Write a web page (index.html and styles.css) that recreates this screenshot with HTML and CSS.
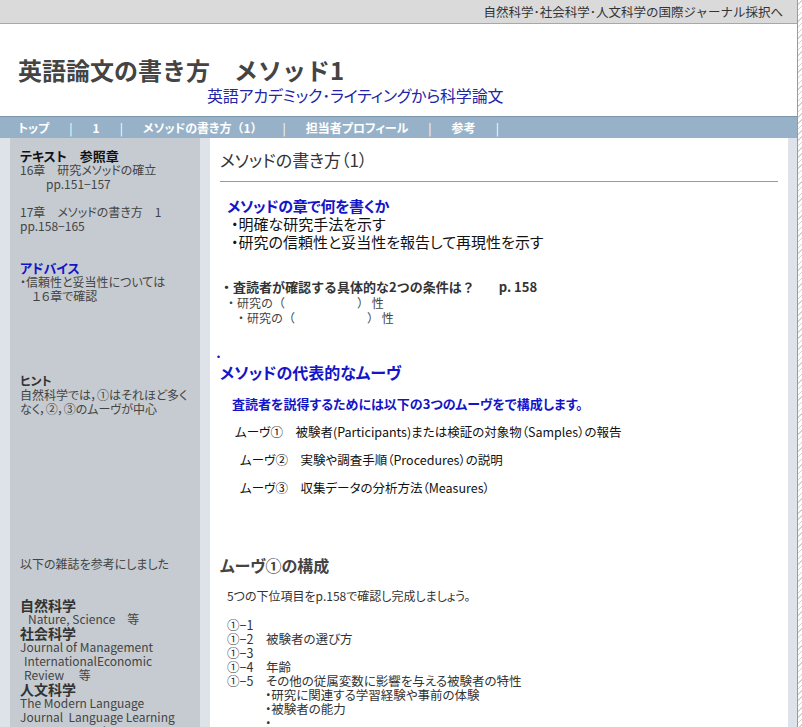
FILE: index.html
```html
<!DOCTYPE html>
<html lang="ja">
<head>
<meta charset="utf-8">
<title>英語論文の書き方　メソッド1</title>
<link rel="stylesheet" href="styles.css">
</head>
<body>
<div class="page">
  <div class="topbar">自然科学･社会科学･人文科学の国際ジャーナル採択へ</div>
  <header class="header">
    <h1 class="title">英語論文の書き方　メソッド1</h1>
    <div class="subtitle">英語アカデミック･ライティングから科学論文</div>
  </header>
  <nav class="nav">
    <span class="nav-item">トップ</span><span class="sep">|</span>
    <span class="nav-item">1</span><span class="sep">|</span>
    <span class="nav-item">メソッドの書き方<span class="fw">（1）</span></span><span class="sep">|</span>
    <span class="nav-item">担当者プロフィール</span><span class="sep">|</span>
    <span class="nav-item">参考</span><span class="sep">|</span>
  </nav>
  <div class="body">
    <aside class="side">
      <div class="s-head">テキスト　参照章</div>
      <div>16章　研究メソッドの確立</div>
      <div class="ind1">pp.151−157</div>
      <div class="blank"></div>
      <div>17章　メソッドの書き方　1</div>
      <div>pp.158−165</div>
      <div class="gap1"></div>
      <div class="s-blue">アドバイス</div>
      <div>・信頼性と妥当性については</div>
      <div>　１６章で確認</div>
      <div class="gap2"></div>
      <div class="s-hint">ヒント</div>
      <div>自然科学では，①はそれほど多く</div>
      <div>なく，②，③のムーヴが中心</div>
      <div class="gap3"></div>
      <div>以下の雑誌を参考にしました</div>
      <div class="gap4"></div>
      <div class="s-cat">自然科学</div>
      <div class="ind2">Nature, Science　等</div>
      <div class="s-cat">社会科学</div>
      <div>Journal of Management</div>
      <div class="ind3">InternationalEconomic</div>
      <div class="ind3">Review　 等</div>
      <div class="s-cat">人文科学</div>
      <div>The Modern Language</div>
      <div>Journal&nbsp; Language Learning</div>
      <div>TESOL Quarterly</div>
    </aside>
    <main class="main">
      <h2 class="m-title">メソッドの書き方（1）</h2>
      <div class="sec1">
        <div class="blue-head">メソッドの章で何を書くか</div>
        <div class="big">・明確な研究手法を示す</div>
        <div class="big">・研究の信頼性と妥当性を報告して再現性を示す</div>
      </div>
      <div class="q">
        <div class="q-head">・査読者が確認する具体的な2つの条件は？<span class="pg">p. 158</span></div>
        <div class="q-a1">・研究の（　　　　　　）&nbsp;性</div>
        <div class="q-a2">・研究の（　　　　　　）&nbsp;性</div>
      </div>
      <div class="dot">・</div>
      <div class="blue-h2">メソッドの代表的なムーヴ</div>
      <div class="blue-lead">査読者を説得するためには以下の3つのムーヴをで構成します。</div>
      <div class="move m1">ムーヴ①　被験者(Participants)または検証の対象物（Samples）の報告</div>
      <div class="move">ムーヴ②　実験や調査手順（Procedures）の説明</div>
      <div class="move">ムーヴ③　収集データの分析方法（Measures）</div>
      <h3 class="sub-h">ムーヴ①の構成</h3>
      <div class="intro">5つの下位項目をp.158で確認し完成しましょう。</div>
      <div class="list">
        <div>①−1</div>
        <div>①−2　被験者の選び方</div>
        <div>①−3</div>
        <div>①−4　年齢</div>
        <div>①−5　その他の従属変数に影響を与える被験者の特性</div>
        <div class="sub">・研究に関連する学習経験や事前の体験</div>
        <div class="sub">・被験者の能力</div>
        <div class="sub">・</div>
      </div>
    </main>
    <div class="gutter"></div>
  </div>
</div>
</body>
</html>
```

FILE: styles.css
```css
html {
  background: repeating-linear-gradient(135deg, #ffffff 0 3px, #d4d4d4 3px 4px);
  height: 100%;
}
body {
  margin: 0;
  font-family: "Noto Sans CJK JP", "Liberation Sans", sans-serif;
  font-feature-settings: "palt";
  font-size: 12px;
  color: #333;
}
.fw {
  font-feature-settings: normal;
}
.page {
  width: 797px;
  border-right: 1px solid #9a9a9a;
  background: #dde3e8;
  min-height: 727px;
}
.topbar {
  height: 23px;
  line-height: 23px;
  background: #dadada;
  border-bottom: 1px solid #a8a8a8;
  text-align: right;
  padding-right: 14px;
  font-size: 12.5px;
  font-feature-settings: normal;
  color: #333;
}
.header {
  background: #fff;
  height: 92px;
  box-sizing: border-box;
  padding-top: 31px;
}
.title {
  margin: 0 0 0 18px;
  font-size: 24px;
  line-height: 30px;
  font-weight: bold;
  color: #444;
  font-feature-settings: normal;
}
.subtitle {
  margin-left: 207px;
  margin-top: -1px;
  font-size: 16px;
  line-height: 22px;
  color: #2424a8;
  letter-spacing: -0.2px;
}
.nav {
  height: 22px;
  background: #97b2c8;
  border-top: 1px solid #7f97ab;
  box-sizing: border-box;
  display: flex;
  align-items: center;
  padding-left: 18px;
  color: #fff;
  font-weight: bold;
  font-size: 12px;
  line-height: 20px;
}
.sep {
  font-weight: normal;
  margin: 0 20px;
}
.body {
  display: flex;
  align-items: stretch;
}
.side {
  margin-left: 10px;
  width: 190px;
  box-sizing: border-box;
  background: #c5cbd0;
  padding: 11px 0 0 10px;
  font-size: 12px;
  line-height: 14px;
  color: #444;
  height: 589px;
  overflow: hidden;
  white-space: nowrap;
}
.s-head {
  font-weight: bold;
  font-size: 13px;
  color: #111;
}
.ind1 { padding-left: 26px; }
.ind2 { padding-left: 8px; }
.ind3 { padding-left: 4px; }
.blank { height: 14px; }
.gap1 { height: 28px; }
.gap2 { height: 71px; }
.gap3 { height: 141px; }
.gap4 { height: 27px; }
.s-blue {
  color: #1515c8;
  font-weight: bold;
  font-size: 13px;
}
.s-hint {
  font-weight: bold;
  font-size: 12px;
  color: #333;
}
.s-cat {
  font-weight: bold;
  font-size: 14px;
  color: #333;
}
.main {
  margin-left: 10px;
  width: 578px;
  background: #fff;
  box-sizing: border-box;
  padding: 10px 10px 0 10px;
  color: #111;
  height: 589px;
  overflow: hidden;
}
.gutter {
  flex: 1;
}
.m-title {
  margin: 0;
  font-size: 17px;
  line-height: 24px;
  font-weight: normal;
  color: #333;
  padding-bottom: 9px;
  border-bottom: 1px solid #9a9a9a;
  margin-bottom: 15px;
  width: 558px;
}
.sec1 {
  padding-left: 7px;
}
.blue-head {
  color: #1515c8;
  font-weight: bold;
  font-size: 15px;
  line-height: 18px;
  letter-spacing: -0.4px;
}
.big {
  font-size: 15px;
  line-height: 18px;
  padding-left: 4px;
  color: #111;
}
.q {
  margin-top: 28px;
  font-size: 12px;
  line-height: 15px;
  color: #444;
}
.q-head {
  font-weight: bold;
  font-size: 13px;
  color: #333;
  margin-bottom: 1px;
  font-feature-settings: normal;
}
.pg {
  margin-left: 24px;
}
.q-a1,
.q-a2 {
  font-feature-settings: normal;
}
.q-a1 { padding-left: 5px; }
.q-a2 { padding-left: 15px; }
.dot {
  margin-top: 27px;
  color: #1515c8;
  font-weight: bold;
  font-size: 10px;
  line-height: 9px;
  margin-left: -4px;
}
.blue-h2 {
  color: #1515c8;
  font-size: 16px;
  line-height: 22px;
  font-weight: bold;
}
.blue-lead {
  color: #1515c8;
  font-weight: bold;
  font-size: 13px;
  line-height: 18px;
  margin-top: 12px;
  padding-left: 12px;
}
.move {
  font-size: 12.5px;
  line-height: 18px;
  margin-top: 10px;
  padding-left: 20px;
  color: #111;
}
.move.m1 {
  padding-left: 15px;
}
.sub-h {
  margin: 57px 0 0 0;
  font-size: 16px;
  line-height: 22px;
  font-weight: bold;
  color: #444;
}
.intro {
  margin-top: 13px;
  padding-left: 7px;
  font-size: 12px;
  line-height: 14px;
  color: #333;
}
.list {
  margin-top: 15px;
  padding-left: 7px;
  font-size: 12.5px;
  line-height: 14px;
  color: #333;
}
.list .sub {
  padding-left: 38px;
}
```
